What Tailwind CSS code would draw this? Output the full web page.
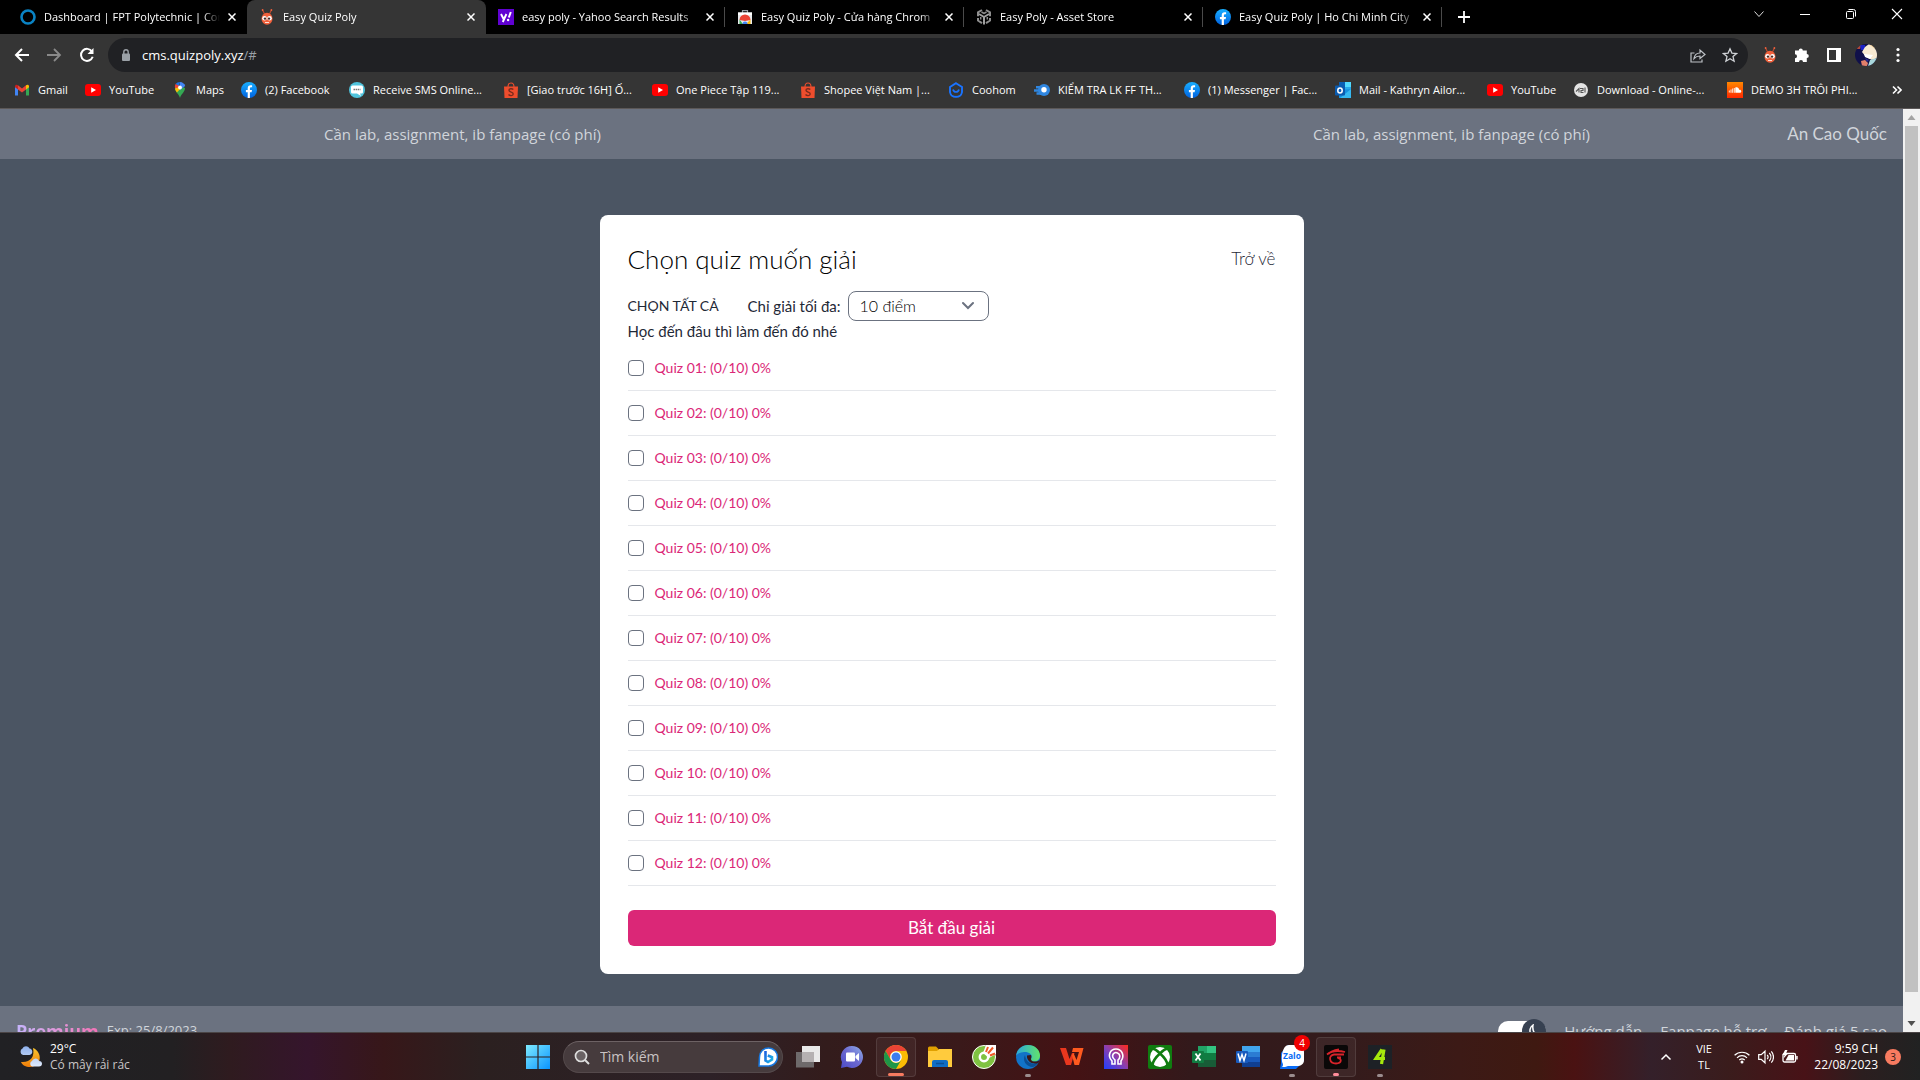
<!DOCTYPE html>
<html lang="vi">
<head>
<meta charset="utf-8">
<title>Easy Quiz Poly</title>
<script src="https://cdn.jsdelivr.net/npm/@tailwindcss/browser@4"></script>
</head>
<body class="h-screen flex flex-col overflow-hidden bg-black font-['Open_Sans',sans-serif] text-white">

<svg class="absolute size-0" aria-hidden="true">
  <defs>
    <linearGradient id="gFb" x1="0" y1="0" x2="0" y2="1"><stop offset="0" stop-color="#19afff"/><stop offset="1" stop-color="#0062e0"/></linearGradient>
    <linearGradient id="gSc" x1="0" y1="0" x2="0" y2="1"><stop offset="0" stop-color="#ff8800"/><stop offset="1" stop-color="#ff2800"/></linearGradient>
    <linearGradient id="gWin" x1="0" y1="0" x2="1" y2="1"><stop offset="0" stop-color="#7eeaff"/><stop offset="1" stop-color="#0a94ff"/></linearGradient>
    <linearGradient id="gChat" x1="0" y1="1" x2="1" y2="0"><stop offset="0" stop-color="#4b4bc8"/><stop offset=".5" stop-color="#6c68cf"/><stop offset="1" stop-color="#8fb0ea"/></linearGradient>
    <linearGradient id="gEdge" x1="0" y1="0" x2="1" y2="0"><stop offset="0" stop-color="#2aa8dc"/><stop offset="1" stop-color="#62e36b"/></linearGradient>
    <linearGradient id="gHead" x1="0" y1="1" x2="1" y2="0"><stop offset="0" stop-color="#1f3fff"/><stop offset=".5" stop-color="#8a3fb0"/><stop offset="1" stop-color="#ff2a1a"/></linearGradient>
    <linearGradient id="gMoon" x1="0" y1="0" x2="0" y2="1"><stop offset="0" stop-color="#fbc52c"/><stop offset="1" stop-color="#ee7d0a"/></linearGradient>
    <linearGradient id="gCloud" x1="0" y1="0" x2="0" y2="1"><stop offset="0" stop-color="#8fb1ec"/><stop offset="1" stop-color="#dfeafc"/></linearGradient>
    <linearGradient id="gBing" x1="0" y1="0" x2="1" y2="1"><stop offset="0" stop-color="#1b5fe0"/><stop offset="1" stop-color="#1fb8e8"/></linearGradient>
  </defs>
  <symbol id="ring" viewBox="0 0 16 16"><circle cx="8" cy="8" r="6.500" fill="none" stroke="#0a83c4" stroke-width="2.600"/></symbol>
  <symbol id="bug" viewBox="0 0 16 16"><path d="M5.500 5 3.600 1M10.500 5 12.400 1" stroke="#c0492f" stroke-width="1.100" fill="none"/><circle cx="3.600" cy="1" r=".9" fill="#f1613c"/><circle cx="12.400" cy="1" r=".9" fill="#f1613c"/><ellipse cx="8" cy="9.700" rx="5.500" ry="6" fill="#f1613c"/><circle cx="5.500" cy="9.300" r="2.300" fill="#fff"/><circle cx="10.500" cy="9.300" r="2.300" fill="#fff"/><circle cx="6" cy="9.600" r="1.200" fill="#4a2a24"/><circle cx="10" cy="9.600" r="1.200" fill="#4a2a24"/><path d="M6 13.500h4" stroke="#fff" stroke-width=".8"/></symbol>
  <symbol id="yahoo" viewBox="0 0 16 16"><path fill="#6001d2" d="M0 0h16v16H0z"/><path d="M3 5l2.600 5M8.400 5 4.800 13" stroke="#fff" stroke-width="1.900" fill="none"/><path d="M12.800 3l-2 5.500" stroke="#fff" stroke-width="2"/><circle cx="10.100" cy="11" r="1.200" fill="#fff"/></symbol>
  <symbol id="store" viewBox="0 0 16 16"><path d="M5.500 4V1.600h5V4" fill="none" stroke="#9aa0a6" stroke-width="1.200"/><path fill="#e8eaed" d="M1 3.500h14V15H1z"/><path fill="#fff" d="M1 3.500h14V6H1z"/><path fill="#ea4335" d="M2.500 11a5.500 5.500 0 0 1 11 0L8 12z"/><path fill="#34a853" d="M2.500 10.500 6 15H2.500z"/><path fill="#fbbc04" d="M13.500 10.500 9 15h4.500z"/><path fill="#4285f4" d="M5.500 15a2.500 2.500 0 0 1 5 0z"/></symbol>
  <symbol id="unity" viewBox="0 0 16 16"><path d="M8 8v7.500M8 8 3 5M8 8l5-3" stroke="#a0a0a0" stroke-width="2"/><path d="M6 1 2 3.300v4M10 1l4 2.300v4M2 9v2.500l4 2.700M14 9v2.500l-4 2.700" fill="none" stroke="#8e8e8e" stroke-width="2"/><path d="M5.500 3 8 4.500 10.500 3M4.700 8v2.500M11.300 8v2.500" fill="none" stroke="#8e8e8e" stroke-width="1.500"/></symbol>
  <symbol id="fb" viewBox="0 0 16 16"><circle cx="8" cy="8" r="8" fill="url(#gFb)"/><path fill="#fff" d="M6.700 15.900V10.300H4.900V8h1.800V6.400c0-2 1.100-3.100 2.900-3.100.8 0 1.500.1 1.500.1v1.900h-1c-.9 0-1.200.6-1.200 1.200V8h2.100l-.4 2.300H8.900v5.600z"/></symbol>
  <symbol id="gmail" viewBox="0 0 16 16"><path fill="#4285f4" d="M1 13.500V4l3 2.400v7.100z"/><path fill="#34a853" d="M12 13.500V6.400L15 4v9.500z"/><path fill="#ea4335" d="M4 3.300 8 6.400l4-3.100v4.200L8 10.500 4 7.500z"/><path fill="#c5221f" d="M1 4.500C1 2.500 2.800 2.200 4 3.300v4.200L1 5.300z"/><path fill="#fbbc04" d="M15 4.500c0-2-1.800-2.300-3-1.200v4.200l3-2.200z"/></symbol>
  <symbol id="yt" viewBox="0 0 16 16"><rect y="2" width="16" height="12" rx="3" fill="#f00"/><path fill="#fff" d="M6.200 5.200v5.600L11 8z"/></symbol>
  <symbol id="maps" viewBox="0 0 16 16"><path fill="#34a853" d="M8 16C7.300 12.500 3 10 3 6l5-2.500L13 6c0 4-4.300 6.500-5 10z"/><path fill="#4285f4" d="M8 0a6 6 0 0 1 5.200 4L8 8z"/><path fill="#1a73e8" d="M8 0a6 6 0 0 0-4.500 2L7 5z"/><path fill="#ea4335" d="M3.500 2A5.500 5.500 0 0 0 3 6l3 0 1.500-2z"/><path fill="#fbbc04" d="M3 6.500c.2 1.500 1 2.800 1.900 4L10 5 7 5z"/><circle cx="8" cy="5.500" r="1.900" fill="#fff"/></symbol>
  <symbol id="sms" viewBox="0 0 16 16"><circle cx="8" cy="8" r="8" fill="#4fc3dc"/><path fill="#fff" d="M3.500 3.500h9a1.500 1.500 0 0 1 1.500 1.500v5a1.500 1.500 0 0 1-1.500 1.500H11l1 2.500-4-2.500H3.500A1.500 1.500 0 0 1 2 10V5a1.500 1.500 0 0 1 1.500-1.500z"/><path d="M4.500 7.500h7" stroke="#777" stroke-width="1.400" stroke-dasharray="1.500 .6"/></symbol>
  <symbol id="shopee" viewBox="0 0 16 16"><path d="M5 5c0-5.300 6-5.300 6 0" fill="none" stroke="#ee4d2d" stroke-width="1.100"/><path fill="#ee4d2d" d="M1 4.500h14l-.5 11.500h-13z"/><path d="M10.300 7.600C9 6.200 5.900 6.400 6 8.300c.1 2.200 4.300 1.400 4.200 3.700-.1 2-3.300 2-4.700.6" fill="none" stroke="#7a2a1c" stroke-width="1.400"/></symbol>
  <symbol id="coohom" viewBox="0 0 16 16"><path d="M8 1.200 14 5v5.200a5.500 5.500 0 0 1-6 4.600 5.500 5.500 0 0 1-6-4.600V5z" fill="none" stroke="#1a73ff" stroke-width="1.900"/><path d="M5 7.500c.8 3.300 5.200 3.300 6 0" fill="none" stroke="#1a73ff" stroke-width="1.700"/></symbol>
  <symbol id="comet" viewBox="0 0 16 16"><circle cx="10" cy="8" r="6" fill="#2f86e0"/><path d="M0 8.500h9M2 5.200h7M2.500 11.500h7" stroke="#2f86e0" stroke-width="2.400"/><circle cx="10" cy="7.800" r="2.700" fill="#fff"/></symbol>
  <symbol id="outlook" viewBox="0 0 16 16"><path fill="#28a8ea" d="M4 0h12v8H4z"/><path fill="#0a5fb4" d="M4 0h6v5H4z"/><path fill="#50d9ff" d="M10 0h6v5h-6z"/><path fill="#1490df" d="M4 8l12-1v9H4z"/><path fill="#35b8f1" d="M16 7v9H5z"/><rect y="3.500" width="10" height="10" rx="1" fill="#0a5bb0"/><ellipse cx="5" cy="8.500" rx="2.200" ry="2.500" fill="none" stroke="#fff" stroke-width="1.500"/></symbol>
  <symbol id="globe" viewBox="0 0 16 16"><circle cx="8" cy="8" r="7" fill="#e4e4e4"/><path d="M3 9.500l3-3v4M7 6.500h3v2H8v2h2.500M12 5.500v5" stroke="#555" stroke-width="1.100" fill="none"/></symbol>
  <symbol id="sc" viewBox="0 0 16 16"><path fill="url(#gSc)" d="M0 0h16v16H0z"/><path d="M2.300 8.500v2M4 7.500v3.300M5.700 6.500v4.300M7.300 6v4.800" stroke="#fff" stroke-width=".9"/><path fill="#fff" d="M8.300 5.500c2-1 3.700.4 3.800 2.200 1.300-.2 2.200.5 2.200 1.500s-.8 1.600-1.700 1.600H8.300z"/></symbol>
</svg>

<!-- Tab strip -->
<div class="h-[34px] shrink-0 flex bg-black pl-2 text-[11px]">
  <div id="tabs" class="flex shrink-0"></div>
  <button class="w-11 grid place-items-center" aria-label="New tab"><svg class="size-3" viewBox="0 0 12 12"><path d="M6 0v12M0 6h12" stroke="#fff" stroke-width="1.800"/></svg></button>
  <div class="ml-auto flex pb-1.5">
    <button class="w-[46px] grid place-items-center" aria-label="Search tabs"><svg class="size-3" viewBox="0 0 12 12"><path d="M1.500 3.500 6 8.500l4.500-5" fill="none" stroke="#ddd"/></svg></button>
    <button class="w-[46px] grid place-items-center" aria-label="Minimize"><svg class="size-3" viewBox="0 0 12 12"><path d="M1 6.500h10" stroke="#fff"/></svg></button>
    <button class="w-[46px] grid place-items-center" aria-label="Restore"><svg class="size-3" viewBox="0 0 12 12"><rect x="1.500" y="3.500" width="7" height="7" rx="1" fill="none" stroke="#fff"/><path d="M3.500 1.500h5a2 2 0 0 1 2 2v5" fill="none" stroke="#fff"/></svg></button>
    <button class="w-[46px] grid place-items-center" aria-label="Close"><svg class="size-3" viewBox="0 0 12 12"><path d="M1 1l10 10M11 1 1 11" stroke="#fff" stroke-width="1.100"/></svg></button>
  </div>
</div>

<!-- Toolbar -->
<div class="h-[38px] shrink-0 flex items-end bg-[#353535]">
  <div class="h-[34px] flex flex-1 items-center">
    <button class="w-[43px] grid place-items-center" aria-label="Back"><svg class="size-4" viewBox="0 0 16 16"><path d="M15 8H2M8 2 2 8l6 6" fill="none" stroke="#fff" stroke-width="2"/></svg></button>
    <button class="w-[22px] grid place-items-center" aria-label="Forward"><svg class="size-4" viewBox="0 0 16 16"><path d="M1 8h13M8 2l6 6-6 6" fill="none" stroke="#8a8a8a" stroke-width="1.800"/></svg></button>
    <button class="w-[43px] grid place-items-center" aria-label="Reload"><svg class="size-4" viewBox="0 0 16 16"><path d="M13 4.500A6 6 0 1 0 13.700 9.800" fill="none" stroke="#fff" stroke-width="2"/><path d="M14.500 1v6H8.500z" fill="#fff"/></svg></button>
    <div class="flex h-[34px] flex-1 items-center rounded-full bg-[#202124] pl-3">
      <svg class="h-3 w-3" viewBox="0 0 12 12"><rect x="2" y="4.500" width="8" height="7.500" rx="1" fill="#9aa0a6"/><path d="M3.800 5V3a2.200 2.200 0 0 1 4.400 0v2" fill="none" stroke="#9aa0a6" stroke-width="1.400"/></svg>
      <div class="ml-[10px] text-[13px] leading-5">cms.quizpoly.xyz<span class="text-[#9aa0a6]">/#</span></div>
      <button class="ml-auto w-8 grid place-items-center" aria-label="Share"><svg class="size-4" viewBox="0 0 16 16"><path d="M4.500 6H1v9h11v-2.500M4 11.500C4.500 8 6.500 6 10 6V3l5 4.500-5 4V9C7.500 9 5.500 9.800 4 11.500z" fill="none" stroke="#bdc1c6" stroke-width="1.200"/></svg></button>
      <button class="mr-0.5 w-8 grid place-items-center" aria-label="Bookmark"><svg class="size-4" viewBox="0 0 16 16"><path d="M8 1.800l1.900 4.300 4.700.4-3.600 3.100 1.100 4.600L8 11.800l-4.100 2.400L5 9.600 1.400 6.500l4.700-.4z" fill="none" stroke="#d0d3d7" stroke-width="1.300"/></svg></button>
    </div>
    <div class="flex items-center pl-1.5 pr-1.5">
      <button class="w-8 grid place-items-center" aria-label="Easy Quiz Poly"><svg class="size-4"><use href="#bug"/></svg></button>
      <button class="w-8 grid place-items-center" aria-label="Extensions"><svg class="size-4" viewBox="0 0 16 16"><path fill="#fff" d="M1 3.500h3.800a2 2 0 1 1 4 0h4V7a2 2 0 1 1 0 4v4H9a2 2 0 1 0-4 0H1v-3.800a2 2 0 1 0 0-4z"/></svg></button>
      <button class="w-8 grid place-items-center" aria-label="Side panel"><svg class="size-3.5" viewBox="0 0 14 14"><path fill="#fff" fill-rule="evenodd" d="M0 0h14v14H0zM2 2v10h7V2z"/></svg></button>
      <button class="w-8 grid place-items-center" aria-label="Profile"><svg class="size-[22px]" viewBox="0 0 22 22"><clipPath id="av"><circle cx="11" cy="11" r="11"/></clipPath><g clip-path="url(#av)"><path fill="#10104a" d="M0 0h22v22H0z"/><path fill="#b04a38" d="M0 0h7l-2 5H0z"/><path fill="#1b22c8" d="M5 1h5v5H6z"/><path fill="#f8ead2" d="M10 3l4-3 8 3v11l-5 2-6-3-4-5z"/><path fill="#f2c87a" d="M15 1h7v5z"/><path fill="#a9d8dc" d="M15 16l7-2v8h-9z"/><path fill="#fff" d="M9 10l9 1-3 4-5-2z"/><path fill="#e2806a" d="M6 17l4-1 3 3-1 3H7z"/><path fill="#2a2a90" d="M10 14l4 2-2 2z"/></g></svg></button>
      <button class="w-8 grid place-items-center" aria-label="Menu"><svg class="size-4" viewBox="0 0 16 16"><g fill="#fff"><circle cx="8" cy="2.500" r="1.600"/><circle cx="8" cy="8" r="1.600"/><circle cx="8" cy="13.500" r="1.600"/></g></svg></button>
    </div>
  </div>
</div>

<!-- Bookmarks bar -->
<nav class="h-[37px] shrink-0 flex items-center border-b border-[#5c5858] bg-[#353535] pl-[14px] pr-[18px] text-[11px]">
  <ul id="bookmarks" class="flex gap-[17px]"></ul>
  <button class="ml-auto" aria-label="More bookmarks"><svg class="size-2.5" viewBox="0 0 10 10"><path d="M1 1.500 4.500 5 1 8.500M5.500 1.500 9 5 5.500 8.500" fill="none" stroke="#fff" stroke-width="1.600"/></svg></button>
</nav>

<!-- Page viewport -->
<div class="flex min-h-0 flex-1 bg-[#4b5563]">
  <div class="flex min-w-0 flex-1 flex-col overflow-hidden">
    <header class="flex h-[50px] shrink-0 items-center bg-[#6b7280] px-4 text-[15px] text-[#d1d5db]">
      <div class="flex flex-1 overflow-hidden whitespace-nowrap pl-[308px]">
        <p class="w-[989px] shrink-0">Cần lab, assignment, ib fanpage (có phí)</p>
        <p>Cần lab, assignment, ib fanpage (có phí)</p>
      </div>
      <a href="#" class="font-['Lato','Open_Sans',sans-serif] text-[17px]">An Cao Quốc</a>
    </header>

    <main class="shrink-0 px-4 pt-14 pb-8 font-['Lato','Open_Sans',sans-serif]">
      <form class="mx-auto w-full max-w-[704px] rounded-lg bg-white p-7 text-[#1f2937]">
        <div class="flex h-8 items-center justify-between">
          <h1 class="text-[26px] font-light text-black">Chọn quiz muốn giải</h1>
          <a href="#" class="text-[17px] font-light">Trở về</a>
        </div>
        <div class="mt-4 flex h-[30px] items-center text-[15px]">
          <button type="button" class="w-[120px] text-left text-sm">CHỌN TẤT CẢ</button>
          <label for="max" class="w-[100px]">Chỉ giải tối đa:</label>
          <div class="relative">
            <select id="max" class="h-[30px] w-[141px] appearance-none rounded-lg border border-[#6b7280] bg-white px-[11px] text-base font-light text-black"><option>10 điểm</option></select>
            <svg class="pointer-events-none absolute right-[15px] top-2.5 h-2.5 w-3" viewBox="0 0 12 10"><path d="M1 2l5 5 5-5" fill="none" stroke="#6b7280" stroke-width="2" stroke-linecap="round"/></svg>
          </div>
        </div>
        <p class="text-[15px] leading-5">Học đến đâu thì làm đến đó nhé</p>
        <ul id="quizzes" class="mt-[5px]"></ul>
        <button type="button" class="mt-6 h-9 w-full rounded-md bg-[#db2777] text-[17px] text-white">Bắt đầu giải</button>
      </form>
    </main>

    <footer class="flex h-[50px] shrink-0 items-center bg-[#6b7280] px-4 text-[#d1d5db]">
      <span class="bg-linear-to-r from-[#c4b5fd] to-[#f472b6] bg-clip-text text-[18px] font-bold text-transparent">Premium</span>
      <span class="ml-2 text-[13px]">Exp: 25/8/2023</span>
      <div class="ml-auto flex items-center gap-[18px] text-[15px]">
        <button class="flex h-5 w-12 items-center justify-end rounded-full bg-white" aria-label="Dark mode"><span class="grid size-6 shrink-0 place-items-center rounded-full bg-[#374151]"><svg class="size-3.5" viewBox="0 0 14 14"><path d="M6 1C3 3 2 7 4 10s6 3.500 8.500 1.500C8 11.500 5 7 6 1z" fill="none" stroke="#fff" stroke-width="1.500"/></svg></span></button>
        <a href="#">Hướng dẫn</a>
        <a href="#">Fanpage hỗ trợ</a>
        <a href="#">Đánh giá 5 sao</a>
      </div>
    </footer>
  </div>
  <div class="flex w-[17px] shrink-0 flex-col items-center bg-[#f1f1f1]">
    <svg class="h-[17px] w-[17px] shrink-0" viewBox="0 0 17 17"><path fill="#a3a3a3" d="M8.500 6 12.500 11h-8z"/></svg>
    <div class="w-[13px] flex-1 bg-[#c1c1c1]"></div>
    <div class="h-[23px] shrink-0"></div>
    <svg class="h-[17px] w-[17px] shrink-0" viewBox="0 0 17 17"><path fill="#505050" d="M8.500 11 12.500 6h-8z"/></svg>
  </div>
</div>

<!-- Taskbar -->
<div class="grid h-12 shrink-0 grid-cols-[1fr_auto_1fr] items-center border-t border-[#4a4445] bg-[linear-gradient(90deg,#212124_0%,#222022_9%,#2f1b1f_12%,#35152c_16%,#371719_20%,#2b2020_25%,#2d2127_37%,#331c1c_43%,#3a191a_50%,#441214_56%,#33191b_62%,#331b1c_70%,#3c1a16_76%,#3f1911_80%,#4a1212_82%,#34202a_86%,#3a1c1c_90%,#481217_94%,#2b1e1f_97%,#212222_100%)] text-[12px] leading-4">
  <button class="flex items-center gap-1.5 pl-[18px] text-left" aria-label="Weather">
    <svg class="h-6 w-[26px]" viewBox="0 0 26 24"><path fill="url(#gMoon)" d="M15 3c10 4 9 19-3 19-4 0-8-2-9-5 9 1 14-5 12-14z"/><path fill="url(#gCloud)" d="M5 10a3.500 3.500 0 0 1-.5-6.500C6 .5 10 .5 11.500 3.500c3.500 0 4 6 0 6.500zM14 21.500a3 3 0 0 1 0-5.500c1.500-3.500 6-3.500 7 0 4 0 4 5.500 0 5.500z"/></svg>
    <span><span class="block">29°C</span><span class="block text-[#c9c5c6]">Có mây rải rác</span></span>
  </button>

  <div class="flex items-center pr-0.5">
    <button class="grid h-10 w-11 place-items-center" aria-label="Start"><svg class="size-6" viewBox="0 0 24 24"><path fill="url(#gWin)" d="M0 0h11.400v11.400H0zM12.600 0H24v11.400H12.600zM0 12.600h11.400V24H0zM12.600 12.600H24V24H12.600z"/></svg></button>
    <label class="mx-[3px] flex h-8 w-[220px] items-center rounded-full border border-t-[#6d6264] border-[#54494b] bg-[#463b3d] pr-1 pl-2.5">
      <svg class="size-4 shrink-0" viewBox="0 0 16 16"><circle cx="7" cy="7" r="5.500" fill="#6a6264" stroke="#ddd" stroke-width="1.700"/><path d="M11 11l4 4" stroke="#ddd" stroke-width="2"/></svg>
      <input type="text" placeholder="Tìm kiếm" aria-label="Tìm kiếm" class="ml-2.5 w-0 flex-1 bg-transparent text-[14px] placeholder:text-[#c9c3c4]">
      <svg class="size-5" viewBox="0 0 20 20"><path d="M1 19l.5-9A9 9 0 1 1 10 19z" fill="#fff" stroke="#1778e0" stroke-width="1.500"/><path d="M7.500 4v9.500l2.500 1.500 4-2.500v-2.300L9.800 8.500" fill="none" stroke="url(#gBing)" stroke-width="2.600"/></svg>
    </label>
    <div id="apps" class="flex"></div>
  </div>

  <div class="flex items-center justify-end pr-[19px]">
    <button aria-label="Show hidden icons"><svg class="h-3 w-3" viewBox="0 0 12 12"><path d="M1.500 8.500 6 4l4.500 4.500" fill="none" stroke="#fff" stroke-width="1.500"/></svg></button>
    <button class="mr-4 ml-[18px] w-7 text-center text-[11px]">VIE<br>TL</button>
    <button class="flex items-center gap-2" aria-label="Network, volume and battery">
      <svg class="size-4" viewBox="0 0 16 16"><g fill="none" stroke="#fff" stroke-width="1.200"><path d="M.6 6.300a10.500 10.500 0 0 1 14.800 0M3 8.800a7 7 0 0 1 10 0M5.300 11a4 4 0 0 1 5.400 0"/></g><circle cx="8" cy="13" r="1.500" fill="#fff"/></svg>
      <svg class="size-4" viewBox="0 0 16 16"><path d="M.7 5.700h2.500L7 2.200v11.600L3.200 10.300H.7zM9.200 5.800a3.500 3.500 0 0 1 0 4.400M11.300 4a6 6 0 0 1 0 8M13.300 2.300a8.500 8.500 0 0 1 0 11.400" fill="none" stroke="#fff" stroke-width="1.200"/></svg>
      <svg class="size-4" viewBox="0 0 16 16"><rect x="1" y="4.500" width="12.500" height="8.500" rx="1.500" fill="none" stroke="#fff" stroke-width="1.300"/><path fill="#fff" d="M6.500 6H12v5.500H3.500zM14.200 7h1.500v3.500h-1.500zM3 1 .5 6h2L1.500 9.500 6 4.500H4L5.500 1z"/></svg>
    </button>
    <button class="ml-3 w-[68px] text-right">9:59 CH<br>22/08/2023</button>
    <span class="ml-[7px] grid size-4 place-items-center rounded-full bg-[#f87b60] text-[10px] text-[#2a1a18]">3</span>
  </div>
</div>

<script>
  const tabs = [
    ['ring', 'Dashboard | FPT Polytechnic | Com'],
    ['bug', 'Easy Quiz Poly'],
    ['yahoo', 'easy poly - Yahoo Search Results'],
    ['store', 'Easy Quiz Poly - Cửa hàng Chrom'],
    ['unity', 'Easy Poly - Asset Store'],
    ['fb', 'Easy Quiz Poly | Ho Chi Minh City'],
  ];
  document.getElementById('tabs').innerHTML = tabs.map(([icon, title], i) => `
    <div class="flex w-[239px] items-center rounded-t-lg pl-3 ${i === 1 ? 'bg-[#353535]' : ''}">
      <svg class="size-4 shrink-0"><use href="#${icon}"/></svg>
      <span class="ml-2 w-[176px] overflow-hidden whitespace-nowrap mask-r-from-90%">${title}</span>
      <button class="ml-1 grid size-4 place-items-center" aria-label="Close tab"><svg class="size-2" viewBox="0 0 8 8"><path d="M.5.5l7 7M7.500.5l-7 7" stroke="#fff" stroke-width="1.500"/></svg></button>
      <span class="ml-auto h-5 w-px ${i > 1 ? 'bg-[#4a4a4a]' : ''}"></span>
    </div>`).join('');

  const bookmarks = [
    ['gmail', 'Gmail', 30], ['yt', 'YouTube', 46], ['maps', 'Maps', 28], ['fb', '(2) Facebook', 67],
    ['sms', 'Receive SMS Online...', 113], ['shopee', '[Giao trước 16H] Ố...', 108],
    ['yt', 'One Piece Tập 119...', 107], ['shopee', 'Shopee Việt Nam |...', 107],
    ['coohom', 'Coohom', 45], ['comet', 'KIỂM TRA LK FF TH...', 109],
    ['fb', '(1) Messenger | Fac...', 110], ['outlook', 'Mail - Kathryn Ailor...', 111],
    ['yt', 'YouTube', 45], ['globe', 'Download - Online-...', 113], ['sc', 'DEMO 3H TRÔI PHI...', 112],
  ];
  document.getElementById('bookmarks').innerHTML = bookmarks.map(([icon, title, w]) => `
    <li><a href="#" class="flex items-center gap-2"><svg class="size-4 shrink-0"><use href="#${icon}"/></svg><span class="whitespace-nowrap" style="width:${w}px">${title}</span></a></li>`).join('');

  document.getElementById('quizzes').innerHTML = Array.from({length: 12}, (_, i) => `
    <li class="border-b border-[#e5e7eb]">
      <label class="flex h-11 items-center text-[#db2777]">
        <input type="checkbox" class="size-4 appearance-none rounded border border-[#6b7280] bg-white">
        <span class="ml-[11px] text-sm">Quiz ${String(i + 1).padStart(2, '0')}: (0/10) 0%</span>
      </label>
    </li>`).join('');

  const apps = [
    ['Task view', '<path fill="#e9e9e9" d="M6 1h18v16H6z"/><path fill="#6e6a6b" d="M0 7h18v15.500H0z"/><path fill="#b5b1b2" d="M6 7h12v10H6z"/>'],
    ['Chat', '<path fill="url(#gChat)" d="M12 1a11 11 0 1 1-5 20.800L1 23l1-6A11 11 0 0 1 12 1z"/><rect x="6" y="7.500" width="9" height="9" rx="1" fill="#fff"/><path fill="#fff" d="M15.500 11l3.500-3v8l-3.500-3z"/>'],
    ['Chrome', '<circle cx="12" cy="12" r="12" fill="#fbbc05"/><path fill="#ea4335" d="M1.600 6A12 12 0 0 1 22.400 6H12a6 6 0 0 0-5.200 9z"/><path fill="#1e9648" d="M1.600 6A12 12 0 0 0 12 24l5.200-9a6 6 0 0 1-10.400 0z"/><circle cx="12" cy="12" r="5.800" fill="#fff"/><circle cx="12" cy="12" r="4.500" fill="#3b7ded"/>', 'active'],
    ['Explorer', '<path fill="#e0a000" d="M0 3a1.500 1.500 0 0 1 1.500-1.500H8L10.500 4v4H0z"/><path fill="#ffcb3d" d="M0 6h9l2-2h13v18H0z"/><path fill="#0f6cc4" d="M4 22v-5a2 2 0 0 1 2-2h12a2 2 0 0 1 2 2v5z"/><path d="M8 18.500h8" stroke="#0a4f96" stroke-width="1.500"/>'],
    ['Cốc Cốc', '<circle cx="12" cy="12" r="11.500" fill="#7fc241" stroke="#fff"/><circle cx="12" cy="12" r="4.200" fill="#7fc241" stroke="#fff" stroke-width="2.500"/><path fill="#fff" d="M11 8 14 0h10v9l-7 4z"/><path d="M14 7l2-5M16 8.500l5-6M18 10.500l5-2" stroke="#f05a28" stroke-width="2"/>'],
    ['Edge', '<circle cx="12" cy="12" r="12" fill="#1273c8"/><path fill="url(#gEdge)" d="M0 11C1 4 6 0 12 0c7 0 12 5 12 10.500 0 4-3 6-6 6-4 0-3.500-2-2.500-3.500C17 9 12 6.500 8 7 4 7.300 1 9 0 11z"/><path fill="#0c4f94" d="M9 10c-3 5 1 12 8 12 2.500-1 4-2.500 5-4.500-6 3-12 0-13-7.500z"/><path fill="#3a1718" d="M15 10c1.200 3-1.500 4 1.500 6.300 3 .7 5 .2 7-1.300l-1 3C16 20 10.500 16 11 10.500z"/>', 'open'],
    ['WPS', '<path fill="#e9371e" d="M0 3h6l3.500 11L12 8h2.500L11 20H6z"/><path fill="#ff5a1f" d="M13 3h10.500L19 20h-4.500L12 10l1.500-2L16.500 15 19 7h-7z"/>'],
    ['Assistant', '<path fill="url(#gHead)" d="M0 0h24v24H0z"/><path d="M8 19h3v-4c-5-4-1-9 2.500-7 3 1 3 5 .5 7v4h3v-3c4-5 1-12-5-12S3 11 8 16z" fill="none" stroke="#fff" stroke-width="1.600"/>'],
    ['Xbox', '<rect width="24" height="24" rx="2" fill="#107c10"/><circle cx="12" cy="12" r="10" fill="#fff"/><path d="M4.500 3.500C8 4 10 6.500 12 8.500c2-2 4-4.500 7.500-5M12 8.500C8 12 5 16 4.500 20M12 8.500c4 3.500 7 7.500 7.500 11.500" fill="none" stroke="#107c10" stroke-width="2.600"/>'],
    ['Excel', '<path fill="#21a366" d="M6 1h18v7H6z"/><path fill="#33c481" d="M15 1h9v7h-9z"/><path fill="#107c41" d="M6 8h18v7H6z"/><path fill="#185c37" d="M6 15h18v7H6z"/><rect y="6" width="12" height="12" rx="1" fill="#107c41"/><path d="M3.500 8.500l5 7M8.500 8.500l-5 7" stroke="#fff" stroke-width="1.800"/>'],
    ['Word', '<path fill="#41a5ee" d="M6 1h18v6H6z"/><path fill="#2b7cd3" d="M6 7h18v5H6z"/><path fill="#185abd" d="M6 12h18v5H6z"/><path fill="#103f91" d="M6 17h18v5H6z"/><rect y="6" width="12" height="12" rx="1" fill="#185abd"/><path d="M2 8.500l2 7 2-6 2 6 2-7" fill="none" stroke="#fff" stroke-width="1.500"/>'],
    ['Zalo', '<path fill="#0a6cf5" d="M8 0h8l8 8v8l-8 8H0l1-6V8z"/><path fill="#fff" d="M9 0h8c4 0 7 3 7 7v8c0 4-3 6-7 6H8c-2 1-4 1-6 1 1.500-1.500 1-3 .5-4C1 13 2 0 9 0z"/><text x="12" y="14" text-anchor="middle" font-size="8.500" font-weight="700" fill="#0a6cf5">Zalo</text>', 'open'],
    ['Garena', '<rect width="24" height="24" rx="2" fill="#0a0808"/><path d="M3 9.500C8 5.500 13 5 21 7M15 4.500C9 5.500 6 7 4.500 9M20 9.500H10c-6 1-5 9 2 9 6 0 6-5 2-5.500M13 12.500h4" fill="none" stroke="#d8232a" stroke-width="1.800"/>', 'alert'],
    ['4', '<path fill="#1d2126" d="M0 0h24v24H0z"/><path d="M14 4.500 8 13.500h9M16 4.500 13.500 19" fill="none" stroke="#a6e80c" stroke-width="3.200"/>', 'open'],
  ];
  const box = {active: 'rounded bg-white/5 border border-white/10', alert: 'rounded bg-white/5 border border-white/10'};
  const dot = {active: 'w-4 bg-[#f87b60]', open: 'w-1.5 bg-[#9b8d8e]', alert: 'w-1.5 bg-[#ff8d9a]'};
  document.getElementById('apps').innerHTML = apps.map(([name, art, state]) => `
    <div class="w-11 px-0.5">
      <button class="relative grid h-10 w-10 place-items-center ${box[state] || ''}" aria-label="${name}">
        <svg class="size-6" viewBox="0 0 24 24">${art}</svg>
        ${dot[state] ? `<span class="absolute bottom-0 left-1/2 h-[3px] -translate-x-1/2 rounded-full ${dot[state]}"></span>` : ''}
        ${name === 'Zalo' ? '<span class="absolute -top-0.5 right-0.5 grid size-4 place-items-center rounded-full bg-[#f00000] text-[10px]">4</span>' : ''}
      </button>
    </div>`).join('');
</script>
</body>
</html>
